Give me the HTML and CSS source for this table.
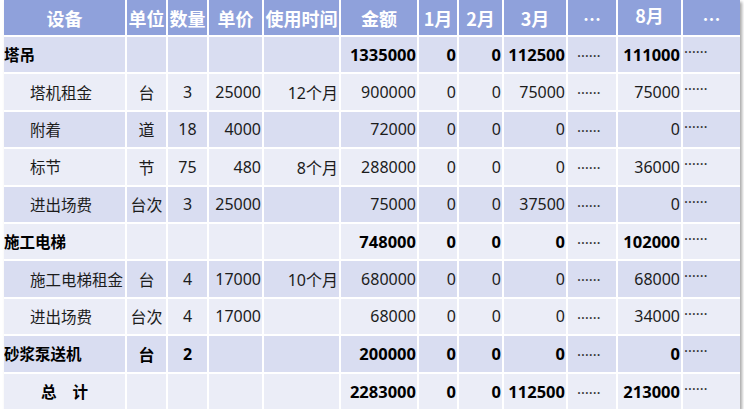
FILE: index.html
```html
<!DOCTYPE html>
<html lang="zh-CN">
<head>
<meta charset="utf-8">
<title>设备费用表</title>
<link rel="stylesheet" href="styles.css">
</head>
<body>
<div class="sheet">
  <div class="row head">
    <span class="c">设备</span><span class="c">单位</span><span class="c">数量</span><span class="c">单价</span><span class="c">使用时间</span><span class="c">金额</span><span class="c">1月</span><span class="c">2月</span><span class="c">3月</span><span class="c">…</span><span class="c m8">8月</span><span class="c">…</span>
  </div>
  <div class="row dark bold">
    <span class="l">塔吊</span><span class="c"></span><span class="c"></span><span class="r"></span><span class="r"></span><span class="r">1335000</span><span class="r">0</span><span class="r">0</span><span class="r">112500</span><span class="d">……</span><span class="r">111000</span><span class="t">……</span>
  </div>
  <div class="row light">
    <span class="l sub">塔机租金</span><span class="c">台</span><span class="c">3</span><span class="r">25000</span><span class="r">12个月</span><span class="r">900000</span><span class="r">0</span><span class="r">0</span><span class="r">75000</span><span class="d">……</span><span class="r">75000</span><span class="t">……</span>
  </div>
  <div class="row dark">
    <span class="l sub">附着</span><span class="c">道</span><span class="c">18</span><span class="r">4000</span><span class="r"></span><span class="r">72000</span><span class="r">0</span><span class="r">0</span><span class="r">0</span><span class="d">……</span><span class="r">0</span><span class="t">……</span>
  </div>
  <div class="row light">
    <span class="l sub">标节</span><span class="c">节</span><span class="c">75</span><span class="r">480</span><span class="r">8个月</span><span class="r">288000</span><span class="r">0</span><span class="r">0</span><span class="r">0</span><span class="d">……</span><span class="r">36000</span><span class="t">……</span>
  </div>
  <div class="row dark">
    <span class="l sub">进出场费</span><span class="c">台次</span><span class="c">3</span><span class="r">25000</span><span class="r"></span><span class="r">75000</span><span class="r">0</span><span class="r">0</span><span class="r">37500</span><span class="d">……</span><span class="r">0</span><span class="t">……</span>
  </div>
  <div class="row light bold">
    <span class="l">施工电梯</span><span class="c"></span><span class="c"></span><span class="r"></span><span class="r"></span><span class="r">748000</span><span class="r">0</span><span class="r">0</span><span class="r">0</span><span class="d">……</span><span class="r">102000</span><span class="t">……</span>
  </div>
  <div class="row dark">
    <span class="l sub">施工电梯租金</span><span class="c">台</span><span class="c">4</span><span class="r">17000</span><span class="r">10个月</span><span class="r">680000</span><span class="r">0</span><span class="r">0</span><span class="r">0</span><span class="d">……</span><span class="r">68000</span><span class="t">……</span>
  </div>
  <div class="row light">
    <span class="l sub">进出场费</span><span class="c">台次</span><span class="c">4</span><span class="r">17000</span><span class="r"></span><span class="r">68000</span><span class="r">0</span><span class="r">0</span><span class="r">0</span><span class="d">……</span><span class="r">34000</span><span class="t">……</span>
  </div>
  <div class="row dark bold">
    <span class="l">砂浆泵送机</span><span class="c">台</span><span class="c">2</span><span class="r"></span><span class="r"></span><span class="r">200000</span><span class="r">0</span><span class="r">0</span><span class="r">0</span><span class="d">……</span><span class="r">0</span><span class="t">……</span>
  </div>
  <div class="row light bold">
    <span class="c total">总&nbsp;&nbsp;&nbsp;&nbsp;计</span><span class="c"></span><span class="c"></span><span class="r"></span><span class="r"></span><span class="r">2283000</span><span class="r">0</span><span class="r">0</span><span class="r">112500</span><span class="d">……</span><span class="r">213000</span><span class="t">……</span>
  </div>
</div>
</body>
</html>
```

FILE: styles.css
```css
html, body {
  margin: 0;
  padding: 0;
  background: #ffffff;
}

.sheet {
  display: grid;
  grid-template-columns: 121px 39px 39px 53px 75px 76px 38px 43px 62px 48px 63px 57px;
  grid-template-rows: 35px repeat(10, 35.4px);
  gap: 2px;
  width: 736px;
  margin-left: 4px;
  background: #ffffff;
  box-shadow: 2px 2px 3px rgba(0, 0, 0, 0.35);
  font-family: "Noto Sans", "Noto Sans CJK SC", sans-serif;
  font-size: 15.5px;
  color: #1c1c1c;
}

.row {
  display: contents;
}

.row > span {
  display: flex;
  align-items: center;
  white-space: nowrap;
  overflow: hidden;
  padding: 0 1px;
}

.row > .r,
.row > .c {
  font-size: 16px;
}

.bold > .r {
  font-size: 16.5px;
}

.row > .total {
  font-size: 15.5px;
}

.head > span {
  background: #8fa1db;
  color: #ffffff;
  font-weight: 700;
  font-family: "Noto Sans CJK SC", sans-serif;
}

.head > .c {
  font-size: 18px;
}

.head > .m8 {
  align-items: flex-start;
  padding-top: 2px;
}

.dark > span {
  background: #d9ddf1;
}

.light > span {
  background: #ebedf7;
}

.bold > span {
  font-weight: 700;
  color: #000000;
}

.row > .l {
  justify-content: flex-start;
  padding-left: 0;
}

.row > .l.sub {
  padding-left: 26px;
}

.row > .c {
  justify-content: center;
}

.row > .r {
  justify-content: flex-end;
}

.row > .d,
.row > .t {
  justify-content: flex-start;
  align-items: flex-start;
  overflow: visible;
  font-size: 15px;
  line-height: 20px;
  font-weight: 400;
  color: #333333;
}

.row > .d {
  padding-left: 9px;
  padding-top: 4px;
}

.row > .t {
  padding-left: 1px;
  padding-top: 0;
}
```
